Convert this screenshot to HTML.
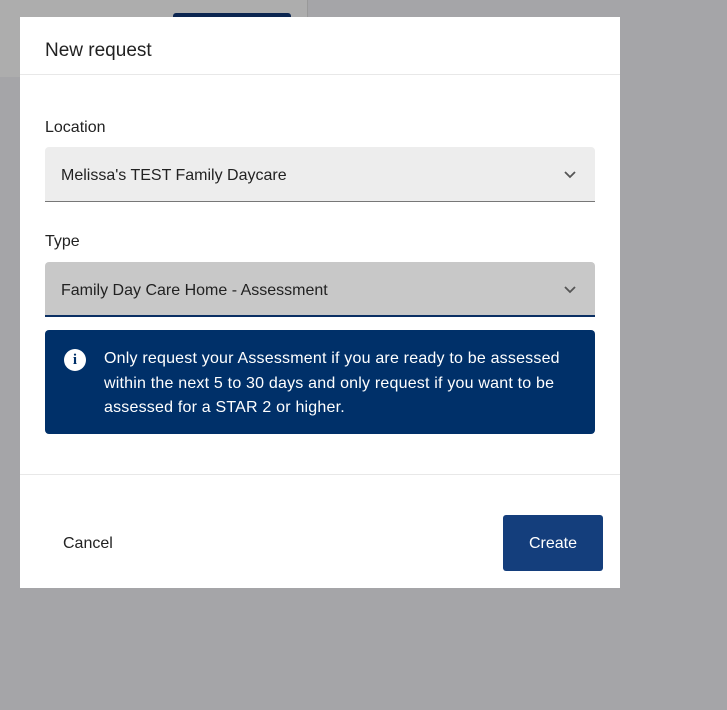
<!DOCTYPE html>
<html><head><style>
body{margin:0;width:727px;height:710px;background:#a5a5a8;font-family:"Liberation Sans",sans-serif;position:relative;overflow:hidden}
.tl{position:absolute;left:0;top:0;width:307px;height:77px;background:#adadad;border-right:1px solid #999}
.bb{position:absolute;left:173px;top:13px;width:118px;height:20px;background:#0b2550;border-radius:3px}
.m{position:absolute;left:20px;top:17px;width:600px;height:571px;background:#fff}
.h{position:absolute;left:25px;top:23px;font-size:19px;color:#222}
.hl{position:absolute;left:0;right:0;top:57px;border-top:1px solid #e8e8e8}
.lbl{position:absolute;left:25px;font-size:16px;color:#222}
.sel{position:absolute;left:25px;width:550px;height:55px;border-radius:4px 4px 0 0;font-size:16px;color:#222;box-sizing:border-box;padding-left:16px;line-height:57px}
.chev{position:absolute;right:18px;top:23px}
.info{position:absolute;left:25px;top:313px;width:550px;height:104px;background:#003069;border-radius:4px;color:#fff;font-size:16px;line-height:24.5px;letter-spacing:0.2px;box-sizing:border-box;padding:17px 20px 0 59px}
.ic{position:absolute;left:19px;top:19px;width:22px;height:22px;border-radius:50%;background:#fff;color:#003069;font-weight:bold;font-size:15px;line-height:22px;text-align:center;font-family:"Liberation Serif",serif}
.fl{position:absolute;left:0;right:0;top:457px;border-top:1px solid #e8e8e8}
.cancel{position:absolute;left:43px;top:518px;font-size:16px;color:#222}
.create{position:absolute;left:483px;top:498px;width:100px;height:56px;background:#143e7c;border-radius:3px;color:#fff;font-size:16px;text-align:center;line-height:58px}
</style></head><body>
<div class="tl"></div><div class="bb"></div>
<div class="m">
<div class="h">New request</div><div class="hl"></div>
<div class="lbl" style="top:102px">Location</div>
<div class="sel" style="top:130px;background:#ededed;border-bottom:1px solid #777">Melissa's TEST Family Daycare<svg class="chev" width="14" height="10" viewBox="0 0 14 10"><path d="M2 2l5 5 5-5" stroke="#555" stroke-width="1.8" fill="none"/></svg></div>
<div class="lbl" style="top:216px">Type</div>
<div class="sel" style="top:245px;background:#c8c8c8;border-bottom:2px solid #0b2f63">Family Day Care Home - Assessment<svg class="chev" width="14" height="10" viewBox="0 0 14 10"><path d="M2 2l5 5 5-5" stroke="#555" stroke-width="1.8" fill="none"/></svg></div>
<div class="info"><div class="ic">i</div>Only request your Assessment if you are ready to be assessed within the next 5 to 30 days and only request if you want to be assessed for a STAR 2 or higher.</div>
<div class="fl"></div>
<div class="cancel">Cancel</div>
<div class="create">Create</div>
</div>
</body></html>
